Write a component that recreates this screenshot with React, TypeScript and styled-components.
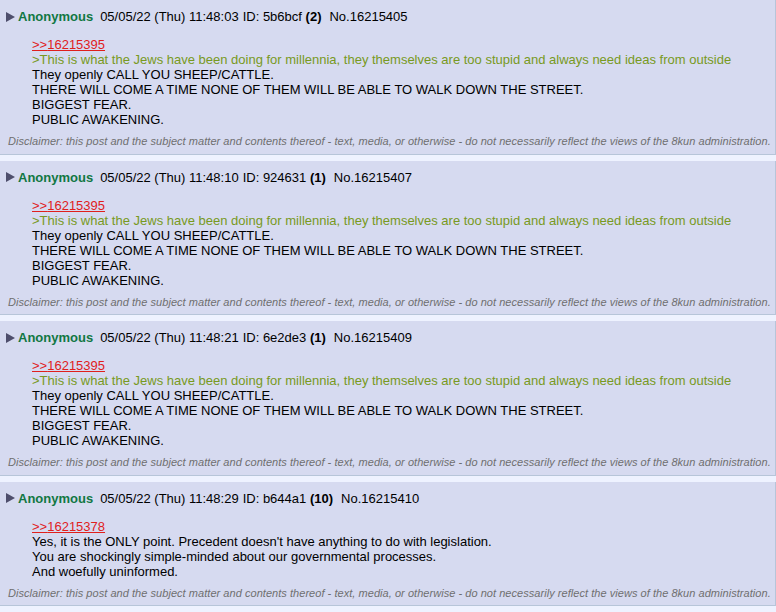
import styled, { createGlobalStyle } from 'styled-components';

type PostData = {
  time: string;
  id: string;
  count: number;
  no: number;
  quote: string;
  green?: string;
  lines: string[];
};

const posts: PostData[] = [
  {
    time: '11:48:03',
    id: '5b6bcf',
    count: 2,
    no: 16215405,
    quote: '16215395',
    green:
      '>This is what the Jews have been doing for millennia, they themselves are too stupid and always need ideas from outside',
    lines: [
      'They openly CALL YOU SHEEP/CATTLE.',
      'THERE WILL COME A TIME NONE OF THEM WILL BE ABLE TO WALK DOWN THE STREET.',
      'BIGGEST FEAR.',
      'PUBLIC AWAKENING.',
    ],
  },
  {
    time: '11:48:10',
    id: '924631',
    count: 1,
    no: 16215407,
    quote: '16215395',
    green:
      '>This is what the Jews have been doing for millennia, they themselves are too stupid and always need ideas from outside',
    lines: [
      'They openly CALL YOU SHEEP/CATTLE.',
      'THERE WILL COME A TIME NONE OF THEM WILL BE ABLE TO WALK DOWN THE STREET.',
      'BIGGEST FEAR.',
      'PUBLIC AWAKENING.',
    ],
  },
  {
    time: '11:48:21',
    id: '6e2de3',
    count: 1,
    no: 16215409,
    quote: '16215395',
    green:
      '>This is what the Jews have been doing for millennia, they themselves are too stupid and always need ideas from outside',
    lines: [
      'They openly CALL YOU SHEEP/CATTLE.',
      'THERE WILL COME A TIME NONE OF THEM WILL BE ABLE TO WALK DOWN THE STREET.',
      'BIGGEST FEAR.',
      'PUBLIC AWAKENING.',
    ],
  },
  {
    time: '11:48:29',
    id: 'b644a1',
    count: 10,
    no: 16215410,
    quote: '16215378',
    lines: [
      "Yes, it is the ONLY point. Precedent doesn't have anything to do with legislation.",
      'You are shockingly simple-minded about our governmental processes.',
      'And woefully uninformed.',
    ],
  },
];

const DISCLAIMER =
  'Disclaimer: this post and the subject matter and contents thereof - text, media, or otherwise - do not necessarily reflect the views of the 8kun administration.';

export default function App() {
  return (
    <>
      <GlobalStyle />
      <Thread>
        {posts.map((p) => (
          <Post key={p.no}>
            <Intro>
              <Toggle viewBox="0 0 9 10">
                <polygon points="0,0 9,5 0,10" />
              </Toggle>
              <Name>Anonymous</Name>
              <Meta>05/05/22 (Thu) {p.time}</Meta>
              <Meta>
                ID: {p.id} <b>({p.count})</b>
              </Meta>
              <Meta>No.{p.no}</Meta>
            </Intro>
            <Body>
              <QuoteLink href="#">&gt;&gt;{p.quote}</QuoteLink>
              {p.green && <GreenText>{p.green}</GreenText>}
              {p.lines.map((l, i) => (
                <Line key={i}>{l}</Line>
              ))}
            </Body>
            <Disclaimer>{DISCLAIMER}</Disclaimer>
          </Post>
        ))}
      </Thread>
    </>
  );
}

const GlobalStyle = createGlobalStyle`
  html, body {
    margin: 0;
    background: #eef2ff;
    font-family: "Liberation Sans", Arial, sans-serif;
    font-size: 13px;
    color: #000;
  }
`;

const Thread = styled.div`
  display: flex;
  flex-direction: column;
  gap: 6px;
  width: 776px;
`;

const Post = styled.div`
  background: #d6daf0;
  border-right: 1px solid #b7c5d9;
  border-bottom: 1px solid #b7c5d9;
  padding: 9px 0 5.5px 0;
`;

const Intro = styled.div`
  display: flex;
  align-items: center;
  line-height: 15px;
  padding-left: 6px;
`;

const Toggle = styled.svg`
  width: 9px;
  height: 10px;
  fill: #4e4e6c;
  margin-right: 3px;
`;

const Name = styled.span`
  color: #117743;
  font-weight: bold;
  margin-right: 7px;
`;

const Meta = styled.span`
  margin-right: 4px;
  white-space: pre;

  b {
    font-weight: bold;
    margin-right: 4px;
  }
`;

const Body = styled.div`
  margin: 13px 0 0 32px;
  line-height: 15px;
`;

const QuoteLink = styled.a`
  display: block;
  color: #e0201d;
  text-decoration: underline;
  width: fit-content;
`;

const GreenText = styled.div`
  color: #789922;
`;

const Line = styled.div``;

const Disclaimer = styled.div`
  margin: 8px 0 0 8px;
  font-size: 11px;
  line-height: 13px;
  font-style: italic;
  letter-spacing: 0.044px;
  color: #6f6f6f;
`;
